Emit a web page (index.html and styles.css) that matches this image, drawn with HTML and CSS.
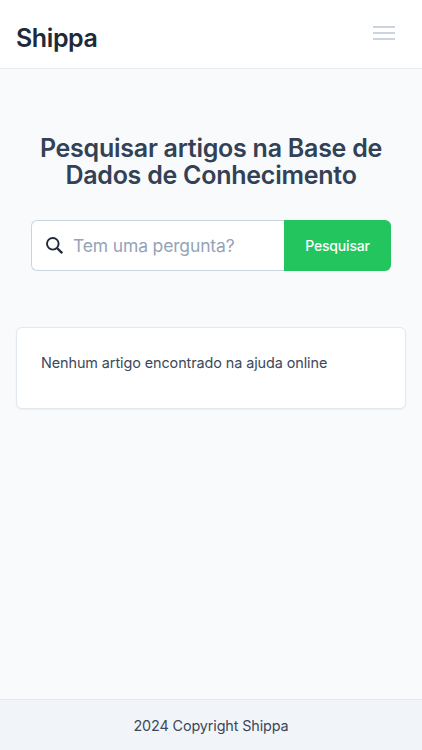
FILE: index.html
```html
<!DOCTYPE html>
<html lang="pt">
<head>
<meta charset="utf-8">
<meta name="viewport" content="width=device-width, initial-scale=1">
<title>Shippa</title>
<link rel="stylesheet" href="styles.css">
</head>
<body>
<header class="navbar">
  <a class="brand">Shippa</a>
  <button class="menu" aria-label="Menu"><span></span><span></span><span></span></button>
</header>
<main class="content">
  <section class="search">
    <h1 class="title">Pesquisar artigos na Base de Dados de Conhecimento</h1>
    <form class="search-form">
      <div class="field">
        <svg class="icon" viewBox="0 0 17 17" fill="none" stroke="currentColor"><circle cx="6.800" cy="6.800" r="5.800" stroke-width="1.900"/><path d="M11 11l5.200 5.200" stroke-width="2.300"/></svg>
        <span class="placeholder">Tem uma pergunta?</span>
      </div>
      <button class="submit" type="button">Pesquisar</button>
    </form>
  </section>
  <section class="card">Nenhum artigo encontrado na ajuda online</section>
</main>
<footer class="footer">2024 Copyright Shippa</footer>
</body>
</html>
```
FILE: styles.css
```css
* { box-sizing: border-box; }
body {
  margin: 0;
  min-height: 750px;
  display: flex;
  flex-direction: column;
  background: #f8fafc;
  color: #3b485b;
  font-family: Inter, sans-serif;
  font-size: 14.4px;
  letter-spacing: -0.08px;
}
.navbar {
  height: 69px;
  padding: 0 27px 0 16px;
  display: flex;
  justify-content: space-between;
  background: #fff;
  border-bottom: 1px solid #e8edf3;
}
.brand {
  padding-top: 8px;
  line-height: 61px;
  font-size: 25px;
  font-weight: 560;
  letter-spacing: -0.4px;
  color: #1e293b;
}
.menu {
  width: 22px;
  height: 14px;
  margin: 26px 0 0;
  padding: 0;
  border: 0;
  background: none;
  display: flex;
  flex-direction: column;
  justify-content: space-between;
}
.menu span { width: 22px; height: 2px; background: #cbd5e1; }
.content { flex: 1; padding: 66px 16px 0; }
.search { padding: 0 15px; }
.title {
  margin: 0 0 32px;
  text-align: center;
  font-size: 25px;
  line-height: 26.500px;
  font-weight: 560;
  letter-spacing: -0.25px;
  color: #334155;
}
.search-form { display: flex; height: 51px; }
.field {
  flex: 1;
  display: flex;
  align-items: center;
  gap: 10px;
  padding-left: 14px;
  background: #fff;
  border: 1px solid #cbd5e1;
  border-right: 0;
  border-radius: 6px 0 0 6px;
}
.icon { width: 17px; height: 17px; color: #1e293b; }
.placeholder { font-size: 17.500px; letter-spacing: -0.15px; color: #94a3b8; }
.submit {
  width: 107px;
  padding: 0;
  border: 0;
  border-radius: 0 6px 6px 0;
  background: #22c55e;
  color: #fff;
  font: 500 14px Inter, sans-serif;
  letter-spacing: -0.18px;
}
.card {
  height: 82px;
  margin-top: 56px;
  padding: 25px 24px;
  line-height: 20px;
  background: #fff;
  border: 1px solid #e2e8f0;
  border-radius: 6px;
  box-shadow: 0 1px 2px rgba(0, 0, 0, .05);
}
.footer {
  height: 51px;
  line-height: 51px;
  letter-spacing: -0.13px;
  text-align: center;
  background: #f1f5f9;
  border-top: 1px solid #e2e8f0;
}
```
